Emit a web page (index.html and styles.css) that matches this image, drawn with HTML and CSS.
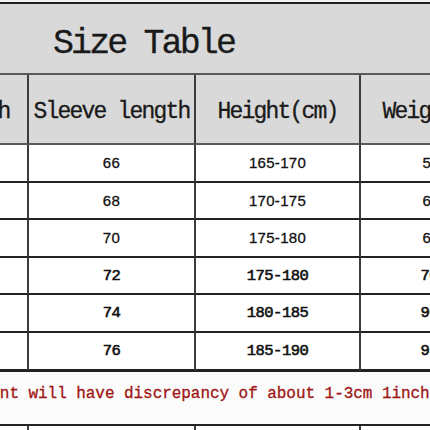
FILE: index.html
```html
<!DOCTYPE html>
<html>
<head>
<meta charset="utf-8">
<link rel="stylesheet" href="styles.css">
</head>
<body>
<div class="sheet">
  <div class="title"><span class="title-text">Size Table</span></div>
  <div class="grid">
    <div class="cell head">Length</div>
    <div class="cell head">Sleeve length</div>
    <div class="cell head">Height(cm)</div>
    <div class="cell head">Weight(kg)</div>

    <div class="cell"></div><div class="cell sans">66</div><div class="cell sans">165-170</div><div class="cell sans">55-60</div>
    <div class="cell"></div><div class="cell sans">68</div><div class="cell sans">170-175</div><div class="cell sans">60-65</div>
    <div class="cell"></div><div class="cell sans">70</div><div class="cell sans">175-180</div><div class="cell sans">65-70</div>
    <div class="cell"></div><div class="cell mono">72</div><div class="cell mono">175-180</div><div class="cell mono">70-80</div>
    <div class="cell"></div><div class="cell mono">74</div><div class="cell mono">180-185</div><div class="cell mono">90-95</div>
    <div class="cell"></div><div class="cell mono">76</div><div class="cell mono">185-190</div><div class="cell mono">95-99</div>

    <div class="note"><span class="note-text">Manual measurement will have discrepancy of about 1-3cm 1inch=2.54cm</span></div>

    <div class="cell"></div><div class="cell"></div><div class="cell"></div><div class="cell"></div>
  </div>
</div>
</body>
</html>
```
FILE: styles.css
```css
html, body {
  margin: 0;
  padding: 0;
  background: #f4f4f4;
  overflow: hidden;
  width: 430px;
  height: 430px;
}

.sheet {
  margin-left: -80px;
  width: 620px;
  padding-top: 2px;
}

.title {
  box-sizing: border-box;
  height: 73px;
  border-top: 2px solid #1e1e1e;
  border-bottom: 2px solid #5a5a5a;
  background: #d9d9d9;
  display: flex;
  align-items: center;
  padding-top: 11px;
  padding-left: 133px;
}

.title-text {
  font-family: "Liberation Mono", monospace;
  font-size: 35px;
  letter-spacing: -2.9px;
  color: #1a1a1a;
  white-space: nowrap;
  -webkit-text-stroke: 0.3px #1a1a1a;
}

.grid {
  display: grid;
  grid-template-columns: 109px 167px 165px 165px;
  grid-template-rows: 70px repeat(6, 37.6px) 55px 40px;
}

.cell {
  box-sizing: border-box;
  border-right: 2px solid #3c3c3c;
  border-bottom: 2px solid #222;
  background: #fff;
  display: flex;
  align-items: center;
  justify-content: center;
  white-space: nowrap;
  color: #111;
}

.head {
  background: #d9d9d9;
  border-bottom-color: #5a5a5a;
  font-family: "Liberation Mono", monospace;
  font-size: 23px;
  letter-spacing: -1.8px;
  color: #1a1a1a;
  padding-top: 5px;
  -webkit-text-stroke: 0.3px #1a1a1a;
}

.sans {
  font-family: "Liberation Sans", Arial, sans-serif;
  font-size: 15px;
  letter-spacing: 0.3px;
  -webkit-text-stroke: 0.3px #111;
}

.mono {
  font-family: "Liberation Mono", monospace;
  font-size: 15.5px;
  letter-spacing: -0.5px;
  -webkit-text-stroke: 0.6px #111;
}

.note {
  grid-column: 1 / -1;
  box-sizing: border-box;
  border-top: 1px solid #222;
  border-bottom: 2px solid #222;
  background: #fbfbfb;
  display: flex;
  align-items: center;
  overflow: hidden;
  padding-bottom: 7px;
}

.note-text {
  margin-left: -73px;
  font-family: "Liberation Mono", monospace;
  font-size: 16px;
  letter-spacing: -0.05px;
  color: #a01515;
  white-space: nowrap;
  -webkit-text-stroke: 0.3px #a01515;
}
```
